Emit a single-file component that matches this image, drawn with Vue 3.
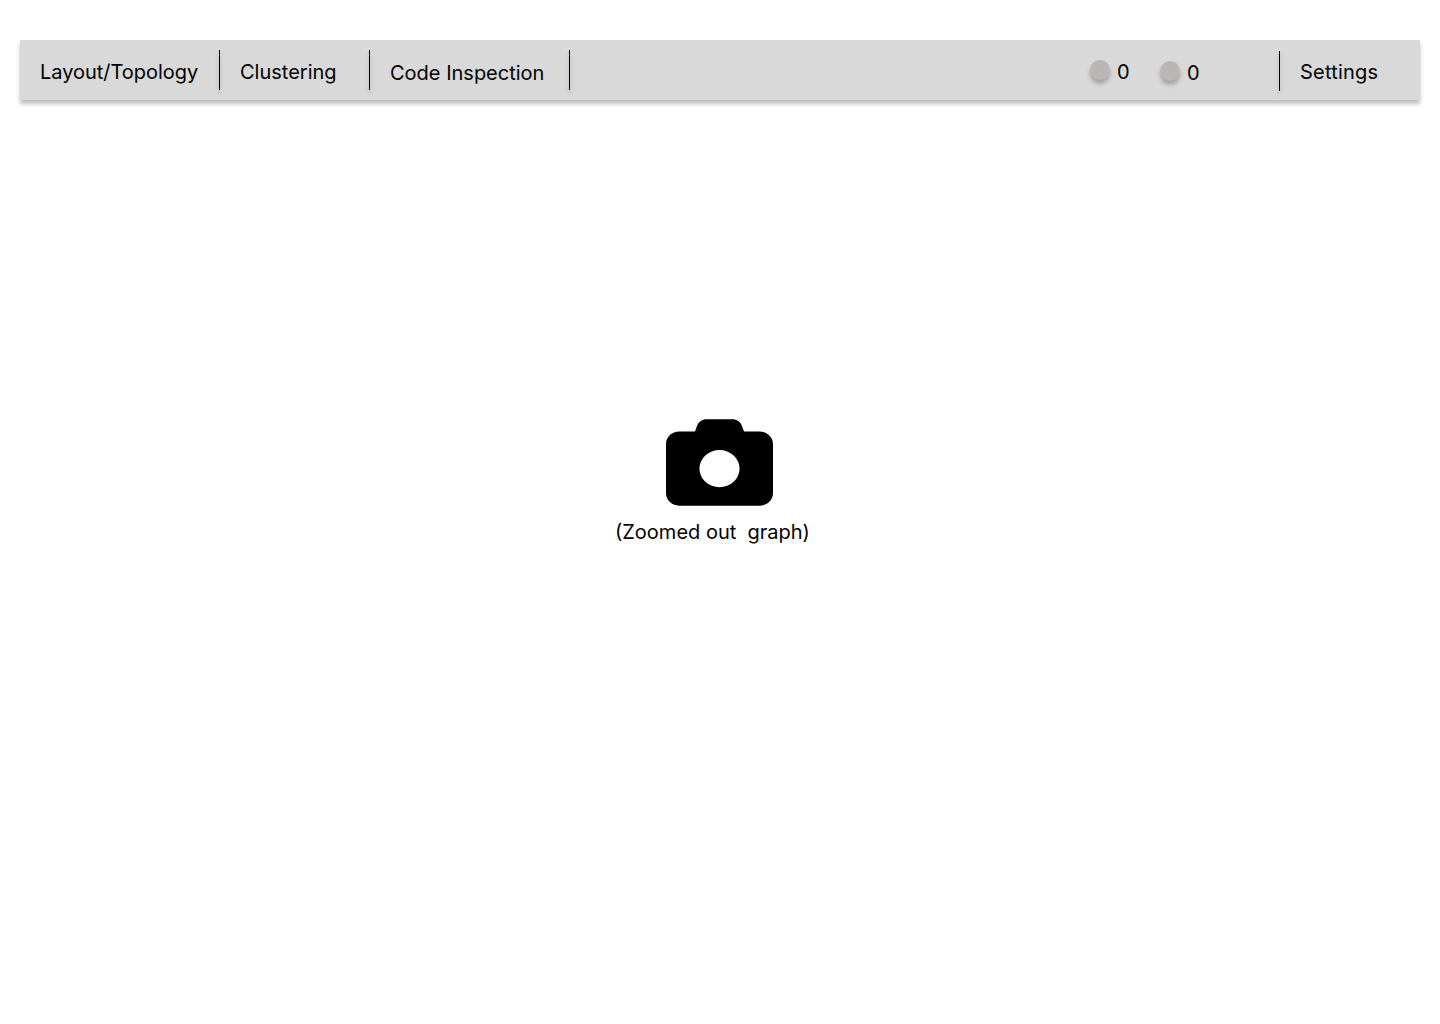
<script setup>
const menu = [
  { label: 'Layout/Topology', kind: 'layout' },
  { label: 'Clustering', kind: 'clustering' },
  { label: 'Code Inspection', kind: 'inspection' },
]
const counters = [0, 0]
</script>

<template>
  <div class="page">
    <header class="toolbar">
      <nav class="menu">
        <div v-for="item in menu" :key="item.kind" class="menu-item" :class="item.kind">
          <span class="label">{{ item.label }}</span>
          <span class="divider"></span>
        </div>
      </nav>
      <div class="counters">
        <div v-for="(count, i) in counters" :key="i" class="counter">
          <span class="dot"></span>
          <span class="label">{{ count }}</span>
        </div>
      </div>
      <div class="settings">
        <span class="divider"></span>
        <span class="label">Settings</span>
      </div>
    </header>
    <main class="canvas">
      <svg class="camera" viewBox="0 0 107 87" aria-hidden="true">
        <path transform="translate(0 0.2) scale(0.20898 0.19308) translate(0 -32)" d="M149.1 64.8L138.7 96H64C28.7 96 0 124.7 0 160V416c0 35.3 28.7 64 64 64H448c35.3 0 64-28.7 64-64V160c0-35.3-28.7-64-64-64H373.3L362.9 64.8C356.4 45.2 338.1 32 317.4 32H194.6c-20.7 0-39 13.2-45.5 32.8zM256 192a96 96 0 1 1 0 192 96 96 0 1 1 0-192z" />
      </svg>
      <p class="caption">(Zoomed out&nbsp; graph)</p>
    </main>
  </div>
</template>

<style>
body {
  margin: 0;
  background: #fff;
}
</style>

<style scoped>
.page {
  box-sizing: border-box;
  height: 1024px;
  padding: 40px 20px 0;
  background: #fff;
  color: #000;
  font-family: Inter, sans-serif;
  font-size: 20px;
  line-height: 24px;
  white-space: nowrap;
}
.toolbar {
  display: flex;
  height: 60px;
  background: #d9d9d9;
  box-shadow: 0 4px 4px rgba(0, 0, 0, 0.25);
}
.menu {
  display: flex;
}
.menu-item {
  box-sizing: border-box;
  display: flex;
  justify-content: space-between;
  padding: 10px 0 0 20px;
}
.layout,
.inspection {
  width: 200px;
}
.clustering {
  width: 150px;
}
.label {
  margin-top: 10px;
}
.layout .label {
  letter-spacing: -0.02px;
}
.inspection .label {
  margin-top: 11px;
}
.divider {
  width: 1px;
  height: 40px;
  background: #000;
  box-shadow: 0 4px 4px rgba(0, 0, 0, 0.25);
}
.counters {
  display: flex;
  align-items: flex-start;
  gap: 30px;
  margin-left: auto;
  padding-top: 20px;
}
.counter {
  display: flex;
  width: 40px;
  gap: 7px;
}
.counter .label {
  margin-top: 0;
}
.counter + .counter {
  margin-top: 1px;
}
.dot {
  width: 20px;
  height: 20px;
  border-radius: 50%;
  background: #bbb6b6;
  box-shadow: 0 4px 4px rgba(0, 0, 0, 0.25);
}
.settings {
  box-sizing: border-box;
  display: flex;
  gap: 20px;
  width: 141px;
  margin-left: 79px;
  padding-top: 11px;
}
.settings .label {
  margin-top: 9px;
  letter-spacing: 0.2px;
}
.canvas {
  display: flex;
  flex-direction: column;
  align-items: flex-start;
  padding: 319px 0 0 595px;
}
.camera {
  width: 107px;
  height: 87px;
  margin-left: 51px;
}
.caption {
  margin: 14px 0 0;
}
</style>
